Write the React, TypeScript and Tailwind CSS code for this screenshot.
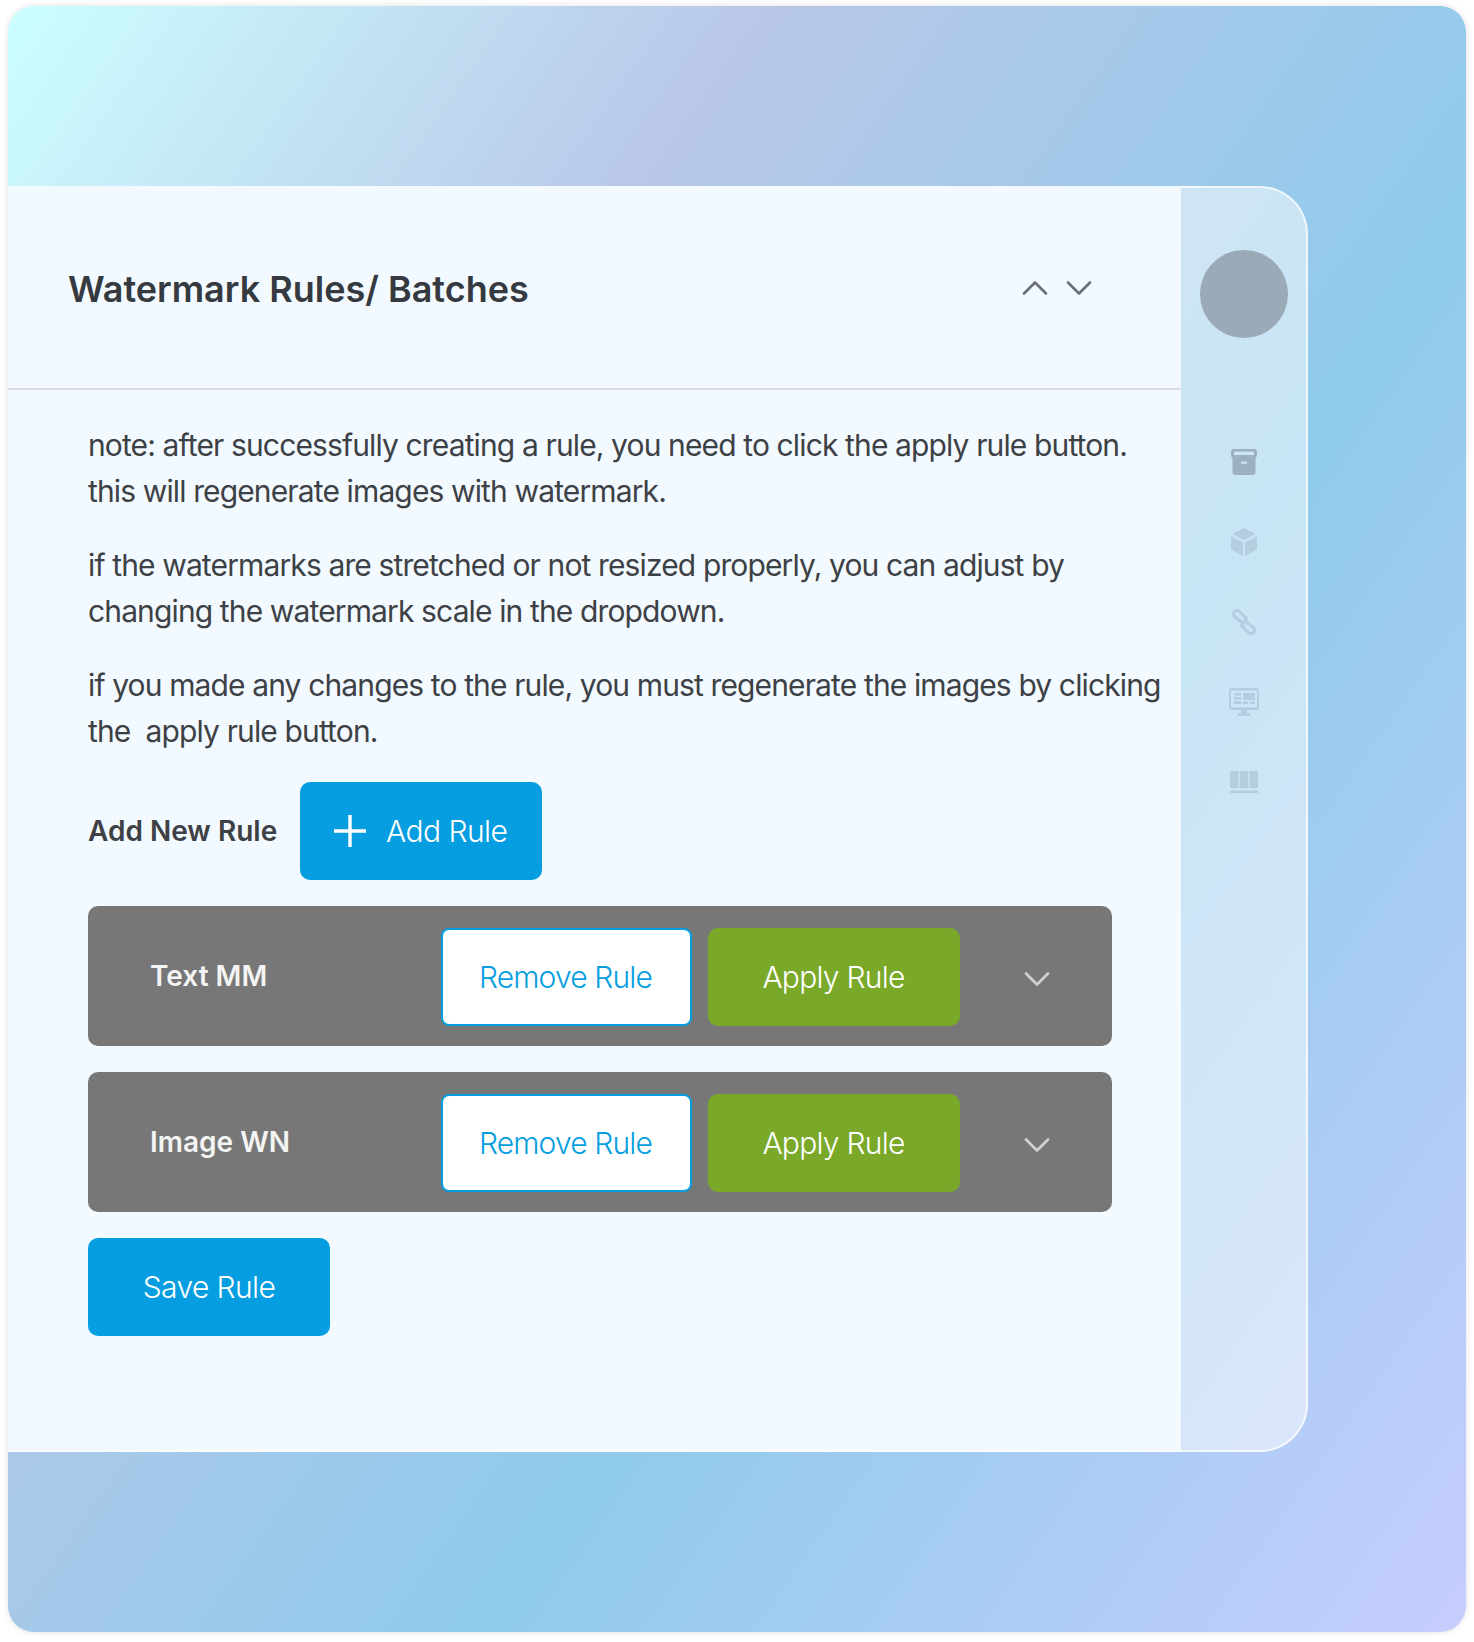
import React from "react";

function Chevron({ dir, className }: { dir: "up" | "down"; className: string }) {
  return (
    <svg width="26" height="16" viewBox="0 0 26 16" fill="none" stroke="currentColor" strokeWidth="2.6" strokeLinecap="round" strokeLinejoin="round" className={className}>
      <path d={dir === "up" ? "M2 13.5 13 2.5 24 13.5" : "M2 2.5 13 13.5 24 2.5"} />
    </svg>
  );
}

function RuleRow({ title }: { title: string }) {
  return (
    <div className="flex h-[140px] w-[1024px] items-center rounded-[10px] bg-[#777777] pt-[2px]">
      <div className="w-[353px] pb-[3px] pl-[62px] text-[28px] font-semibold text-[#f4f4f4]">{title}</div>
      <button className="h-[98px] w-[251px] rounded-[8px] border-2 border-[#069ee0] bg-white pr-[2px] text-[30px] font-light tracking-[-0.85px] text-[#069ee0]">Remove Rule</button>
      <button className="ml-[16px] h-[98px] w-[252px] rounded-[10px] bg-[#7aa92a] pr-[1px] text-[30px] font-light tracking-[-0.75px] text-white">Apply Rule</button>
      <Chevron dir="down" className="ml-[64px] mt-[4px] text-[#d2d2d2]" />
    </div>
  );
}

export default function App() {
  return (
    <div className="min-h-[1642px] bg-white pl-[8px] pr-[8px] pt-[6px] font-['Inter','Liberation_Sans',sans-serif]">
      <div className="h-[1626px] w-[1458px] rounded-[26px] bg-[linear-gradient(125deg,#ccffff_0%,#b9c7e8_29%,#8fcbec_62%,#c6cdfc_100%)] pt-[180px] shadow-[0_0_6px_rgba(0,0,0,0.12)]">
        <div className="flex h-[1266px] w-[1300px]">
          <main className="w-[1173px] border-b-2 border-white/70 bg-[#f2f9ff] text-[#3d4145]">
            <header className="flex h-[204px] items-center justify-between border-b-2 border-[#d9dde3] pl-[60px] pr-[89px]">
              <h1 className="pt-[4px] text-[36px] font-semibold text-[#343a40]">Watermark Rules/ Batches</h1>
              <div className="mt-[2px] flex items-center gap-[18px] text-[#6b7075]">
                <Chevron dir="up" className="" />
                <Chevron dir="down" className="" />
              </div>
            </header>
            <div className="pl-[80px] pt-[32px]">
              <div className="flex flex-col gap-[28px] text-[30px] leading-[46px] tracking-[-0.87px]">
                <p>
                  note: after successfully creating a rule, you need to click the apply rule button.
                  <br />
                  this will regenerate images with watermark.
                </p>
                <p>
                  if the watermarks are stretched or not resized properly, you can adjust by
                  <br />
                  changing the watermark scale in the dropdown.
                </p>
                <p>
                  if you made any changes to the rule, you must regenerate the images by clicking
                  <br />
                  the{"\u00a0\u00a0"}apply rule button.
                </p>
              </div>
              <div className="mt-[28px] flex items-center">
                <span className="w-[212px] text-[28px] font-semibold">Add New Rule</span>
                <button className="flex h-[98px] w-[242px] items-center rounded-[10px] bg-[#069ee0] pl-[34px] text-[30px] font-light tracking-[-0.55px] text-white">
                  <svg width="32" height="32" viewBox="0 0 32 32" fill="none" stroke="currentColor" strokeWidth="3.4">
                    <path d="M0 16H32M16 0V32" />
                  </svg>
                  <span className="ml-[20px]">Add Rule</span>
                </button>
              </div>
              <div className="mt-[26px] flex flex-col gap-[26px]">
                <RuleRow title="Text MM" />
                <RuleRow title="Image WN" />
              </div>
              <button className="mt-[26px] h-[98px] w-[242px] rounded-[10px] bg-[#069ee0] text-[30px] font-light tracking-[-0.6px] text-white">Save Rule</button>
            </div>
          </main>
          <aside className="flex w-[127px] flex-col items-center rounded-r-[48px] border-y-2 border-r-2 border-white/70 bg-white/50 pt-[62px]">
            <div className="size-[88px] rounded-full bg-[#9aabb7]" />
            <div className="mt-[111px] flex flex-col items-center">
              <svg width="26" height="26" viewBox="0 0 26 26" className="text-[#9cb0c0]" fill="currentColor">
                <path fillRule="evenodd" d="M2.5 0h21A2.5 2.5 0 0 1 26 2.5v4A2.500 2.500 0 0 1 24.500 8.700V23a3 3 0 0 1-3 3h-17a3 3 0 0 1-3-3V8.700A2.500 2.500 0 0 1 0 6.500v-4A2.500 2.500 0 0 1 2.500 0ZM3 2.500v3.500h20V2.500ZM10 12.500v2.200h6v-2.200Z" />
              </svg>
              <svg width="26" height="28" viewBox="0 0 26 28" className="mt-[53px] text-[#b4cddf]" fill="currentColor">
                <path d="M13 0 24.500 6 13 12 1.500 6ZM0 8.500 12 14.700V28L0 21.500ZM26 8.500V21.500L14 28V14.700Z" />
              </svg>
              <svg width="26" height="26" viewBox="0 0 26 26" className="mt-[53px] text-[#b4cddf]" fill="none" stroke="currentColor" strokeWidth="3" strokeLinecap="round" strokeLinejoin="round">
                <path d="M12.500 14.500 3.500 7.500A3.200 3.200 0 0 1 8.500 2.500L15.500 9.500" />
                <path d="M13.500 11.500 22.500 18.500A3.200 3.200 0 0 1 17.500 23.500L10.500 16.500" />
              </svg>
              <svg width="30" height="28" viewBox="0 0 30 28" className="mt-[53px] text-[#b4cddf]" fill="currentColor">
                <path fillRule="evenodd" d="M2 0h26a2 2 0 0 1 2 2v18a2 2 0 0 1-2 2H18v3h3v3H9v-3h3v-3H2a2 2 0 0 1-2-2V2a2 2 0 0 1 2-2Zm0 2.500V19.500h26V2.500Z" />
                <path d="M5 5h7v2.500H5ZM5 9h7v2.500H5ZM5 13h7v3H5ZM14 5h12v7H14ZM14 13.500h5V16h-5ZM21 13.500h5V16h-5Z" />
              </svg>
              <svg width="28" height="22" viewBox="0 0 28 22" className="mt-[55px] text-[#b4cddf]" fill="currentColor">
                <path d="M0 0h8.500v17H0ZM9.700 0h8.600v17H9.700ZM19.500 0H28v17h-8.500ZM0 19.500h28V22H0Z" />
              </svg>
            </div>
          </aside>
        </div>
      </div>
    </div>
  );
}
